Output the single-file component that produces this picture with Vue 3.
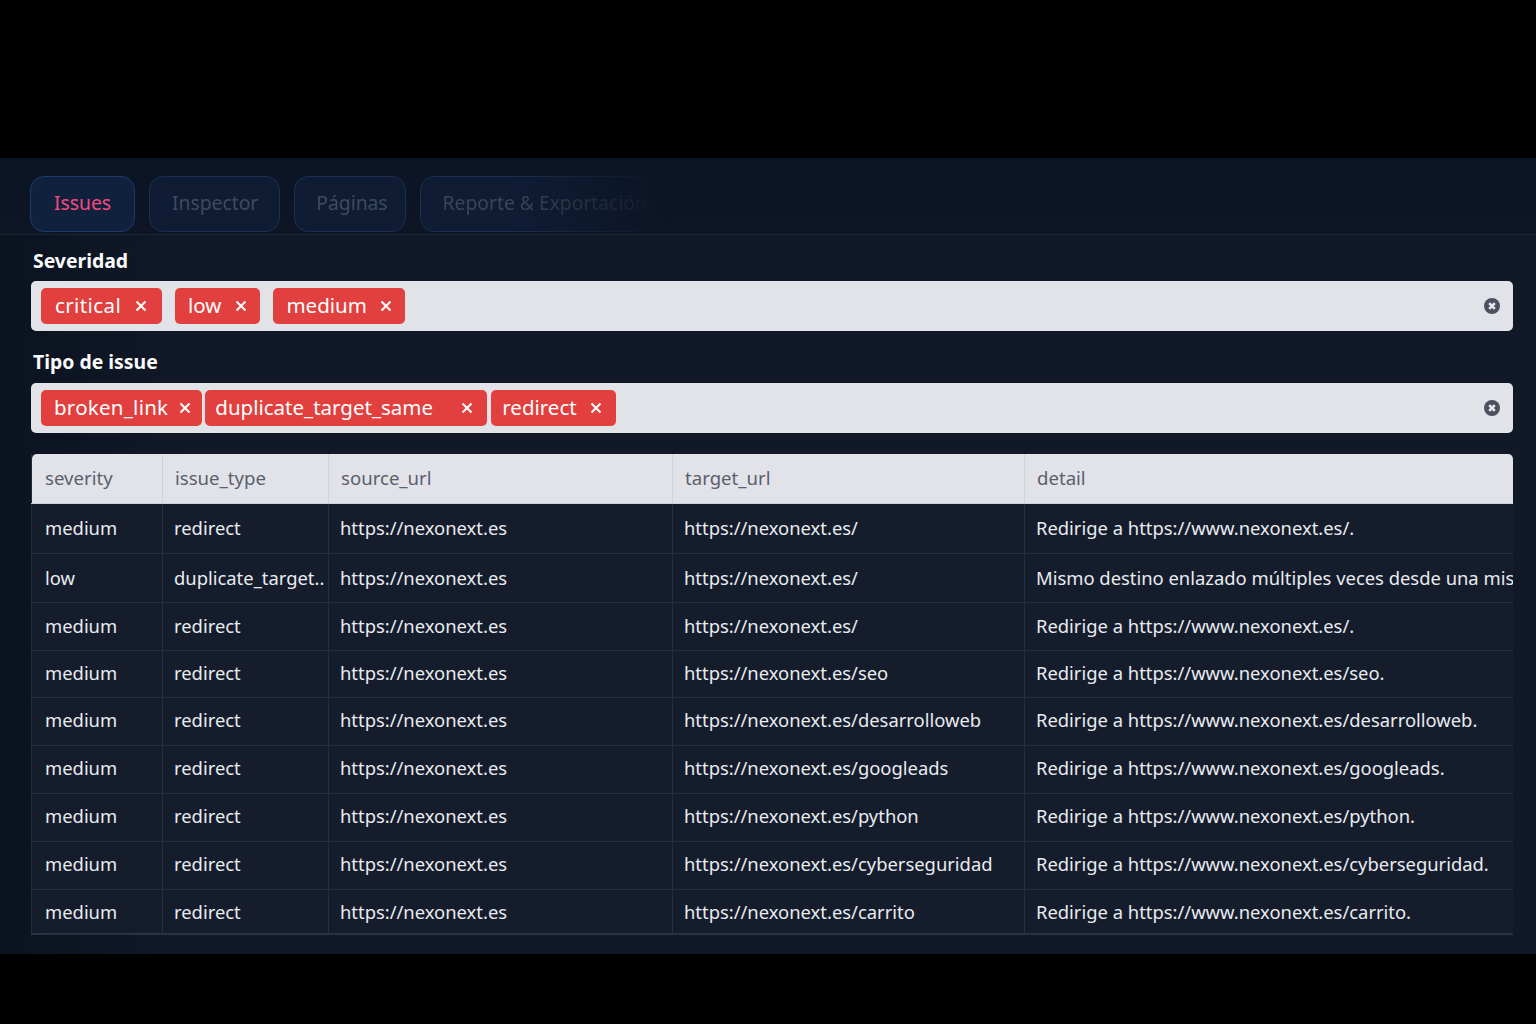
<template>
  <div class="screen">
    <div class="app">
      <nav class="tabs">
        <button v-for="tab in tabs" :key="tab" class="tab" :class="{ active: tab === 'Issues' }">{{ tab }}</button>
      </nav>

      <section class="filters">
        <div v-for="filter in filters" :key="filter.label" class="filter">
          <label>{{ filter.label }}</label>
          <div class="select" :class="filter.cls">
            <span v-for="tag in filter.tags" :key="tag" class="tag">
              <span>{{ tag }}</span>
              <svg viewBox="0 0 12 12" class="tag-x"><path d="M1.5 1.5l9 9M10.5 1.5l-9 9" /></svg>
            </span>
            <svg viewBox="0 0 16 16" class="clear">
              <circle cx="8" cy="8" r="8" />
              <path d="M5.2 5.2l5.6 5.6M10.8 5.2l-5.6 5.6" />
            </svg>
          </div>
        </div>
      </section>

      <table class="grid">
        <colgroup>
          <col class="c1" />
          <col class="c2" />
          <col class="c3" />
          <col class="c4" />
          <col />
        </colgroup>
        <thead>
          <tr>
            <th v-for="col in columns" :key="col">{{ col }}</th>
          </tr>
        </thead>
        <tbody>
          <tr v-for="(row, i) in rows" :key="i">
            <td>{{ row.severity }}</td>
            <td>{{ row.type }}</td>
            <td>https://nexonext.es</td>
            <td>{{ row.target }}</td>
            <td>{{ row.detail }}</td>
          </tr>
        </tbody>
      </table>
    </div>
  </div>
</template>

<script setup>
const tabs = ['Issues', 'Inspector', 'Páginas', 'Reporte & Exportación']

const filters = [
  { label: 'Severidad', cls: 'sev', tags: ['critical', 'low', 'medium'] },
  { label: 'Tipo de issue', cls: 'kind', tags: ['broken_link', 'duplicate_target_same', 'redirect'] },
]

const columns = ['severity', 'issue_type', 'source_url', 'target_url', 'detail']

const redirect = (path) => ({
  severity: 'medium',
  type: 'redirect',
  target: 'https://nexonext.es/' + path,
  detail: 'Redirige a https://www.nexonext.es/' + path + '.',
})

const rows = [
  redirect(''),
  {
    severity: 'low',
    type: 'duplicate_target..',
    target: 'https://nexonext.es/',
    detail: 'Mismo destino enlazado múltiples veces desde una misma página.',
  },
  redirect(''),
  redirect('seo'),
  redirect('desarrolloweb'),
  redirect('googleads'),
  redirect('python'),
  redirect('cyberseguridad'),
  redirect('carrito'),
]
</script>

<style>
html,
body {
  margin: 0;
  background: #000;
}
</style>

<style scoped>
.screen {
  height: 1024px;
  padding-top: 158px;
  box-sizing: border-box;
  background: #000;
  font-family: "Noto Sans", "Open Sans", sans-serif;
  overflow: hidden;
}

.app {
  height: 796px;
  background: linear-gradient(90deg, #0b1220 0%, #111827 12%, #111827 100%);
  overflow: hidden;
}

.tabs {
  display: flex;
  gap: 14px;
  height: 77px;
  padding: 18px 30px 0;
  box-sizing: border-box;
  border-bottom: 1px solid #1b2433;
  background: linear-gradient(180deg, #0b1424, #0e1626);
}

.tab {
  height: 56px;
  padding: 0 21px 4px 22px;
  border: 1px solid #1c2f50;
  border-radius: 14px;
  background: #0f1c34;
  color: #3d4a5e;
  font: inherit;
  font-size: 19.3px;
}

.tab:nth-child(3) {
  padding: 0 17px 4px 21px;
}

.tab:last-child {
  width: 270px;
  text-align: left;
  border-right: 0;
  border-radius: 14px 0 0 14px;
  color: #3a4558;
  -webkit-mask-image: linear-gradient(90deg, #000 35%, transparent 92%);
  mask-image: linear-gradient(90deg, #000 35%, transparent 92%);
}

.tab.active {
  padding: 0 23px 4px;
  background: #10213e;
  border-color: #1f3a66;
  color: #f4497f;
}

.filters {
  padding: 0 23px 0 31px;
}

.filter {
  margin-top: 12px;
}

.filter + .filter {
  margin-top: 18px;
}

label {
  display: block;
  margin: 0 0 6px 2px;
  height: 28px;
  line-height: 28px;
  color: #fafafa;
  font-size: 19.4px;
  font-weight: 700;
}

.filter + .filter label {
  line-height: 26px;
}

.select {
  display: flex;
  align-items: center;
  height: 50px;
  padding: 0 13px 0 10px;
  box-sizing: border-box;
  border-radius: 5px;
  background: #e2e3e9;
}

.sev {
  gap: 13px;
}

.kind {
  gap: 4px;
}

.tag {
  display: flex;
  align-items: center;
  justify-content: space-between;
  height: 36px;
  padding: 0 13px 2px;
  box-sizing: border-box;
  gap: 14px;
  border-radius: 5px;
  background: #e2403f;
  color: #fff;
  font-size: 20.5px;
}

.tag-x {
  position: relative;
  top: 1px;
  width: 12px;
  height: 12px;
  flex: none;
  fill: none;
  stroke: #fff;
  stroke-width: 2;
}

.sev .tag:first-child {
  width: 121px;
  padding: 0 15px 2px 14px;
  letter-spacing: 0.4px;
}

.sev .tag:nth-child(3) {
  gap: 13px;
}

.kind .tag:nth-child(1) {
  padding: 0 11px 2px 13px;
  gap: 11px;
  letter-spacing: 0.25px;
}

.kind .tag:nth-child(2) {
  width: 282px;
  margin-left: -1px;
  padding: 0 14px 2px 10px;
}

.kind .tag:nth-child(3) {
  padding: 0 14px 2px 11px;
  gap: 13px;
}

.clear {
  width: 16px;
  height: 16px;
  margin-left: auto;
  flex: none;
}

.clear circle {
  fill: #4c505f;
}

.clear path {
  fill: none;
  stroke: #e8e9ee;
  stroke-width: 2.6;
}

.grid {
  width: 1482px;
  margin: 21px 0 0 31px;
  table-layout: fixed;
  border-collapse: collapse;
  border-bottom: 2px solid #2a3342;
  border-left: 1px solid #232c3b;
  background: #151d2d;
  color: #e9ebef;
  font-size: 18.4px;
}

.c1 {
  width: 131px;
}

.c2 {
  width: 166px;
}

.c3 {
  width: 344px;
}

.c4 {
  width: 352px;
}

th {
  height: 46px;
  padding: 0 12px 3px;
  text-align: left;
  font-size: 18.6px;
  font-weight: 400;
  color: #5a606c;
  background: #e2e3e9;
  border-left: 1px solid #d0d2d9;
  border-bottom: 1px solid #cfd2da;
}

th:first-child {
  padding-left: 13px;
  border-left: 0;
  border-radius: 5px 0 0 0;
}

th:last-child {
  border-radius: 0 5px 0 0;
}

td {
  height: 43px;
  padding: 0 0 4px 11px;
  white-space: nowrap;
  overflow: hidden;
  border-left: 1px solid #262f3f;
  border-bottom: 1px solid #262f3f;
}

td:first-child {
  padding-left: 13px;
  border-left: 0;
}

/* the rows are not all the same height in the design */
tbody tr:nth-child(1) td {
  height: 47px;
  padding-bottom: 2px;
}

tbody tr:nth-child(2) td {
  height: 46px;
  padding-bottom: 2px;
}

tbody tr:nth-child(3) td {
  height: 44px;
  padding-bottom: 3px;
}

tbody tr:nth-child(4) td {
  height: 43px;
  padding-bottom: 3px;
}

tbody tr:last-child td {
  height: 43px;
  padding-bottom: 0;
  border-bottom: 0;
}
</style>
